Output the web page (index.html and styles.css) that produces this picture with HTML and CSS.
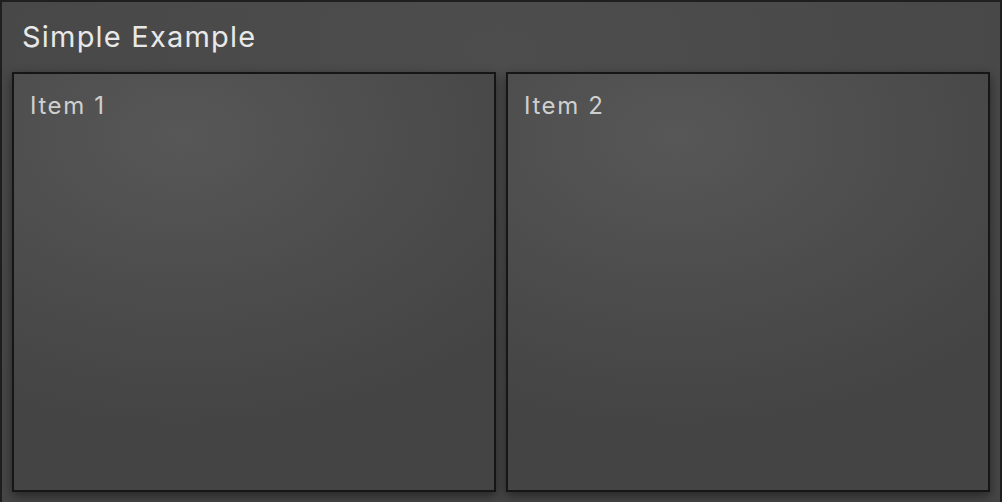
FILE: index.html
```html
<!DOCTYPE html>
<html>
<head>
<meta charset="utf-8">
<link rel="stylesheet" href="styles.css">
</head>
<body>
<div class="panel">
  <h1 class="title">Simple Example</h1>
  <div class="items">
    <div class="item"><span class="item-label">Item 1</span></div>
    <div class="item"><span class="item-label">Item 2</span></div>
  </div>
</div>
</body>
</html>
```
FILE: styles.css
```css
html, body {
  margin: 0;
  padding: 0;
  background: #2a2a2a;
  width: 1002px;
  height: 502px;
  overflow: hidden;
}
.panel {
  box-sizing: border-box;
  width: 1002px;
  height: 504px;
  border: 2px solid #1f1f1f;
  background: radial-gradient(ellipse 70% 90% at 50% 10%, #4d4d4d 0%, #464646 100%);
  padding: 0 10px 10px 10px;
  display: flex;
  flex-direction: column;
  font-family: Inter, "Noto Sans", sans-serif;
}
.title {
  margin: 0;
  height: 70px;
  box-sizing: border-box;
  padding: 18px 0 0 10px;
  font-size: 29px;
  font-weight: 400;
  line-height: 34px;
  letter-spacing: 1.2px;
  color: #e8e8e8;
}
.items {
  display: flex;
  gap: 10px;
  height: 420px;
}
.item {
  flex: 1;
  box-sizing: border-box;
  border: 2px solid #161616;
  background: radial-gradient(ellipse 90% 70% at 35% 15%, #575757 0%, #4c4c4c 55%, #444444 100%);
  box-shadow: 0 4px 10px rgba(0, 0, 0, 0.45);
  padding: 18px 16px;
}
.item-label {
  display: block;
  font-size: 24px;
  line-height: 28px;
  letter-spacing: 1.6px;
  color: #cfcfcf;
}
```
